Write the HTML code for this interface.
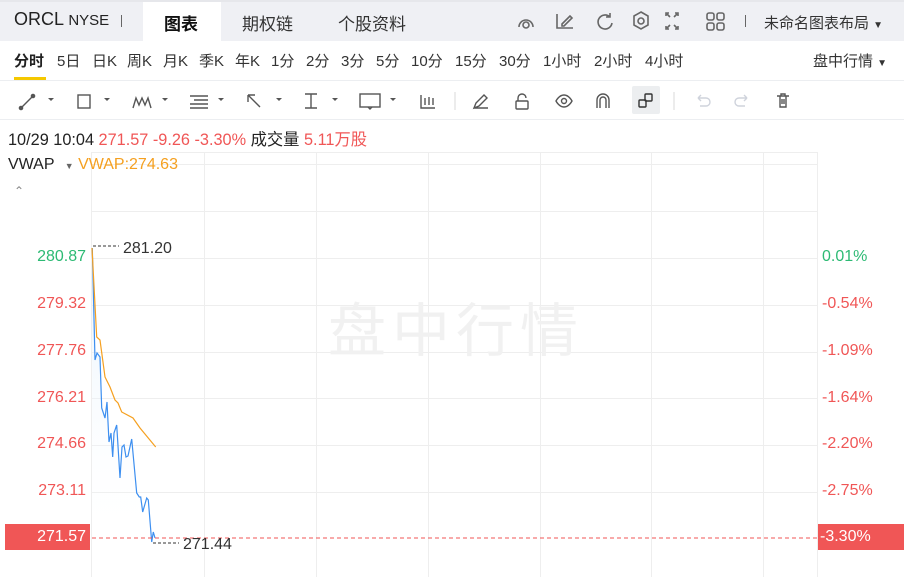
<!DOCTYPE html>
<html><head><meta charset="utf-8"><style>
*{margin:0;padding:0;box-sizing:border-box}
body{width:904px;height:577px;overflow:hidden;background:#fff;font-family:"Liberation Sans","Noto Sans CJK SC",sans-serif;color:#333;position:relative}
.a{position:absolute;white-space:nowrap}
.top{position:absolute;left:0;top:0;width:904px;height:41px;background:#eff0f4;border-top:2px solid #e6e7eb}
.tab{font-size:17px;top:10px}
.per{font-size:15px;top:50px;color:#333}
.red{color:#f05656}
.gl{position:absolute;background:#eeeeee}
.ax{font-size:16px;position:absolute;white-space:nowrap}
.lx{right:818px;text-align:right}
</style></head><body>
<div class="top"></div>
<div class="a" style="left:143px;top:2px;width:78px;height:39px;background:#fff"></div>
<div class="a tab" style="left:14px;font-size:18px;top:9px;color:#222">ORCL <span style="font-size:15px">NYSE</span></div>
<div class="a" style="left:121px;top:15px;width:1px;height:12px;background:#666"></div>
<div class="a tab" style="left:164px;font-weight:bold;color:#111">图表</div>
<div class="a tab" style="left:242px;color:#333">期权链</div>
<div class="a tab" style="left:338px;color:#333">个股资料</div>
<svg class="a" style="left:510px;top:8px" width="230" height="26" fill="none" stroke="#666" stroke-width="1.6">
<path d="M9 19a7 7 0 1 1 14 0"/><circle cx="16" cy="17" r="3"/>
<path d="M47 6v14h16M52 16l8-8 2 2-8 8h-2z"/>
<path d="M100 9a7 7 0 1 0 2 6M100 5v4h-4"/>
<circle cx="131" cy="13" r="3"/><path d="M131 4l7 4v9l-7 4-7-4V8z"/>
<path d="M159 5h-3v3M165 5h3v3M159 21h-3v-3M165 21h3v-3M157 6l3 3M167 6l-3 3M157 20l3-3M167 20l-3-3"/>
<rect x="197" y="5" width="7" height="7" rx="2"/><rect x="207" y="5" width="7" height="7" rx="2"/><rect x="197" y="15" width="7" height="7" rx="2"/><rect x="207" y="15" width="7" height="7" rx="2"/>
</svg>
<div class="a" style="left:745px;top:15px;width:1px;height:12px;background:#666"></div>
<div class="a" style="left:764px;top:12px;font-size:15px;color:#333">未命名图表布局 <span style="font-size:10px">▼</span></div>

<div class="a per" style="left:14px;font-weight:bold;color:#222">分时</div>
<div class="a" style="left:14px;top:77px;width:32px;height:3px;background:#f5c800"></div>
<div class="a per" style="left:57px">5日</div>
<div class="a per" style="left:92px">日K</div>
<div class="a per" style="left:127px">周K</div>
<div class="a per" style="left:163px">月K</div>
<div class="a per" style="left:199px">季K</div>
<div class="a per" style="left:235px">年K</div>
<div class="a per" style="left:271px">1分</div>
<div class="a per" style="left:306px">2分</div>
<div class="a per" style="left:341px">3分</div>
<div class="a per" style="left:376px">5分</div>
<div class="a per" style="left:411px">10分</div>
<div class="a per" style="left:455px">15分</div>
<div class="a per" style="left:499px">30分</div>
<div class="a per" style="left:543px">1小时</div>
<div class="a per" style="left:594px">2小时</div>
<div class="a per" style="left:645px">4小时</div>
<div class="a per" style="left:813px">盘中行情 <span style="font-size:10px">▼</span></div>
<div class="a" style="left:0;top:80px;width:904px;height:1px;background:#eceef1"></div>

<div class="a" style="left:632px;top:86px;width:28px;height:28px;background:#eceef0;border-radius:2px"></div>
<svg class="a" style="left:0;top:86px" width="904" height="28" fill="none" stroke="#555" stroke-width="1.4">
<path d="M21 22l12-12"/><circle cx="21" cy="22" r="1.6" fill="#555"/><circle cx="33" cy="10" r="1.6" fill="#555"/>
<path d="M48 12l3 3 3-3z" fill="#555" stroke="none"/>
<rect x="78" y="9" width="12" height="13"/>
<path d="M104 12l3 3 3-3z" fill="#555" stroke="none"/>
<path d="M133 22l3-10 3 7 3-7 3 7 3-7 3 10"/>
<path d="M162 12l3 3 3-3z" fill="#555" stroke="none"/>
<path d="M190 10h18M194 14h14M190 18h18M190 22h18"/>
<path d="M218 12l3 3 3-3z" fill="#555" stroke="none"/>
<path d="M248 9l12 12M248 9v7M248 9h7"/>
<path d="M276 12l3 3 3-3z" fill="#555" stroke="none"/>
<path d="M305 8h12M305 22h12M311 8v14"/>
<path d="M332 12l3 3 3-3z" fill="#555" stroke="none"/>
<rect x="360" y="8" width="20" height="13"/><path d="M368 21l2 2 2-2"/>
<path d="M390 12l3 3 3-3z" fill="#555" stroke="none"/>
<path d="M421 9v13h14M425 12v7M429 11v8M433 12v7"/>
<path d="M455 6v18" stroke="#e4e4e4"/>
<path d="M474 22l2-5 8-8 3 3-8 8zM474 22h14"/>
<rect x="516" y="15" width="12" height="8" rx="1"/><path d="M518 15v-3a4 4 0 0 1 8 0"/>
<path d="M556 15s3-6 8-6 8 6 8 6-3 6-8 6-8-6-8-6z"/><circle cx="564" cy="15" r="2.5"/>
<path d="M597 22v-8a6 6 0 0 1 12 0v8M600 22v-8a3 3 0 0 1 6 0v8"/>
<rect x="639" y="14" width="7" height="7" rx="1" stroke="#333"/><rect x="645" y="8" width="7" height="7" rx="1" stroke="#333"/>
<path d="M674 6v18" stroke="#e4e4e4"/>
<path d="M698 12h8a4 4 0 0 1 0 8h-6M698 12l3-3M698 12l3 3" stroke="#cfd3dc"/>
<path d="M747 12h-8a4 4 0 0 0 0 8h6M747 12l-3-3M747 12l-3 3" stroke="#cfd3dc"/>
<path d="M777 10h12M780 10v11h6v-11M781 10v-2h4v2M782 13v5M784 13v5"/>
</svg>
<div class="a" style="left:0;top:119px;width:904px;height:1px;background:#eceef1"></div>

<div class="a" style="left:8px;top:126px;font-size:16.3px;color:#222">10/29 10:04 <span class="red">271.57 -9.26 -3.30%</span> 成交量 <span class="red">5.11万股</span></div>

<div class="gl" style="left:91px;top:152px;width:727px;height:1px"></div>
<div class="gl" style="left:91px;top:164px;width:727px;height:1px"></div>
<div class="gl" style="left:91px;top:211px;width:727px;height:1px"></div>
<div class="gl" style="left:91px;top:258px;width:727px;height:1px"></div>
<div class="gl" style="left:91px;top:305px;width:727px;height:1px"></div>
<div class="gl" style="left:91px;top:352px;width:727px;height:1px"></div>
<div class="gl" style="left:91px;top:398px;width:727px;height:1px"></div>
<div class="gl" style="left:91px;top:445px;width:727px;height:1px"></div>
<div class="gl" style="left:91px;top:492px;width:727px;height:1px"></div>
<div class="gl" style="left:91px;top:152px;width:1px;height:425px"></div>
<div class="gl" style="left:204px;top:152px;width:1px;height:425px"></div>
<div class="gl" style="left:316px;top:152px;width:1px;height:425px"></div>
<div class="gl" style="left:428px;top:152px;width:1px;height:425px"></div>
<div class="gl" style="left:540px;top:152px;width:1px;height:425px"></div>
<div class="gl" style="left:651px;top:152px;width:1px;height:425px"></div>
<div class="gl" style="left:763px;top:152px;width:1px;height:425px"></div>
<div class="gl" style="left:817px;top:152px;width:1px;height:425px"></div>

<div class="a" style="left:328px;top:296px;font-size:58px;line-height:72px;color:#f1f1f1;letter-spacing:6px">盘中行情</div>

<div class="a" style="left:8px;top:156px;font-size:16px;color:#222">VWAP <span style="font-size:9px;color:#666;margin-left:6px">▼</span> <span style="color:#f5a020">VWAP:274.63</span></div>
<div class="a" style="left:14px;top:184px;font-size:12px;color:#888">⌃</div>

<div class="ax lx" style="top:248px;color:#2dba74">280.87</div>
<div class="ax lx red" style="top:295px">279.32</div>
<div class="ax lx red" style="top:342px">277.76</div>
<div class="ax lx red" style="top:389px">276.21</div>
<div class="ax lx red" style="top:435px">274.66</div>
<div class="ax lx red" style="top:482px">273.11</div>
<div class="a" style="left:5px;top:524px;width:85px;height:26px;background:#f05656"></div>
<div class="ax lx" style="top:528px;color:#fff">271.57</div>

<div class="ax" style="left:822px;top:248px;color:#2dba74">0.01%</div>
<div class="ax red" style="left:822px;top:295px">-0.54%</div>
<div class="ax red" style="left:822px;top:342px">-1.09%</div>
<div class="ax red" style="left:822px;top:389px">-1.64%</div>
<div class="ax red" style="left:822px;top:435px">-2.20%</div>
<div class="ax red" style="left:822px;top:482px">-2.75%</div>
<div class="a" style="left:818px;top:524px;width:86px;height:26px;background:#f05656"></div>
<div class="ax" style="left:820px;top:528px;color:#fff">-3.30%</div>

<svg class="a" style="left:0;top:0" width="904" height="577">
<defs><linearGradient id="g" x1="0" y1="0" x2="0" y2="1"><stop offset="0" stop-color="#d8ebfb" stop-opacity=".7"/><stop offset="1" stop-color="#fff" stop-opacity="0"/></linearGradient></defs>
<path d="M92.3 248L95 360 97 353 100 357 101.7 408 105 418 107 402 109 442 111 433 112.7 457 114 433 116.7 425 120 478 122 447 124 445 126 457 128 456 131.7 439 136.7 493 139.3 497 140.7 497 142.7 512 146.7 498 148.3 500 151.7 542 153.3 532 155 538 L155 540 L92 540Z" fill="url(#g)"/>
<path d="M92.3 248L95 360 97 353 100 357 101.7 408 105 418 107 402 109 442 111 433 112.7 457 114 433 116.7 425 120 478 122 447 124 445 126 457 128 456 131.7 439 136.7 493 139.3 497 140.7 497 142.7 512 146.7 498 148.3 500 151.7 542 153.3 532 155 538" fill="none" stroke="#3d8ff0" stroke-width="1.2"/>
<path d="M92 248L96.7 337 100 340 105 377 110 387 115 400 118 403 121.7 412 133 418 140 428 155.7 447" fill="none" stroke="#f5a020" stroke-width="1.2"/>
<path d="M92 538H817" stroke="#f05656" stroke-dasharray="4 3" stroke-width="1"/>
<path d="M93 246H119" stroke="#333" stroke-dasharray="3 2" stroke-width="1"/>
<path d="M153 543H179" stroke="#333" stroke-dasharray="3 2" stroke-width="1"/>
<text x="123" y="253" font-size="16" fill="#333" font-family="Liberation Sans">281.20</text>
<text x="183" y="549" font-size="16" fill="#333" font-family="Liberation Sans">271.44</text>
</svg>
</body></html>
